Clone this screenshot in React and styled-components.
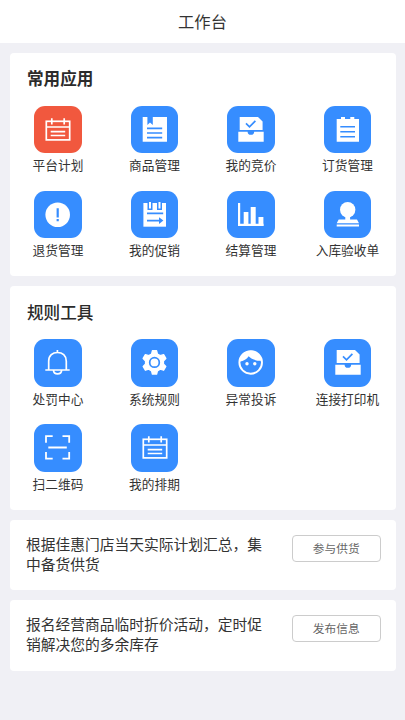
import React from 'react';
import styled, { createGlobalStyle } from 'styled-components';

const AZUL = '#368dff';
const ROJO = '#f1583e';

const GlobalStyle = createGlobalStyle`
    * {
        box-sizing: border-box;
    }
    body {
        margin: 0;
        background: #f0f0f5;
        font-family: "Noto Sans CJK SC", sans-serif;
        color: #333;
    }
`;

const Page = styled.div`
    min-height: 720px;
    display: flex;
    flex-direction: column;
    background: #f0f0f5;
`;

const Header = styled.header`
    height: 43px;
    display: flex;
    align-items: center;
    justify-content: center;
    padding-bottom: 2px;
    background: #fff;
    font-size: 16.3px;
    line-height: 24px;
    color: #333;
`;

const Main = styled.main`
    display: flex;
    flex-direction: column;
    gap: 10px;
    padding: 9.5px 9px 0 10px;
`;

const Card = styled.section`
    height: 223.8px;
    background: #fff;
    border-radius: 4px;
`;

const CardTitle = styled.h2`
    margin: 0;
    padding: 13.8px 17px 0;
    height: ${({ $height }) => $height || '53.5px'};
    font-size: 16.6px;
    line-height: 24px;
    font-weight: ${({ $weight }) => $weight || 700};
    color: #2b2b2b;
`;

const Grid = styled.div`
    display: grid;
    grid-template-columns: repeat(4, 96.5px);
    grid-auto-rows: 85px;
    margin-left: -0.3px;
`;

const Item = styled.div`
    display: flex;
    flex-direction: column;
    align-items: center;
    gap: 2px;
`;

const Tile = styled.div`
    width: 47.4px;
    height: 47.4px;
    border-radius: 11px;
    background: ${({ $bg }) => $bg || AZUL};
    color: ${({ $bg }) => $bg || AZUL};

    svg {
        display: block;
        width: 100%;
        height: 100%;
    }
`;

const Label = styled.span`
    font-size: 12.7px;
    line-height: 19px;
    white-space: nowrap;
`;

const Notice = styled.section`
    height: 70.3px;
    display: flex;
    justify-content: space-between;
    align-items: flex-start;
    padding: 15px 15.5px 0 16px;
    background: #fff;
    border-radius: 4px;
`;

const NoticeText = styled.p`
    margin: -1px 0 0;
    width: 240px;
    font-size: 14.75px;
    line-height: 19.6px;
`;

const Button = styled.button`
    width: 88.5px;
    height: 27px;
    padding: 0 0 1px;
    border: 1px solid #ccc;
    border-radius: 4px;
    background: #fff;
    font-family: inherit;
    font-size: 11.7px;
    line-height: 18px;
    color: #666;
`;

// white shapes, details cut out with currentColor (the tile colour)
const Icon = ({ children }) => (
    <svg viewBox="0 0 47.4 47.4" fill="none">{children}</svg>
);

const CalendarIcon = () => (
    <Icon>
        <g stroke="#fff" strokeWidth="1.7">
            <rect x="12.3" y="15.3" width="23.4" height="18.6" />
            <path d="M12 21H36M17.8 12.2V18.6M30.2 12.2V18.6M16.7 25.6H31.2M16.7 29.5H31.2" />
        </g>
    </Icon>
);

const BookIcon = () => (
    <Icon>
        <path fill="#fff" d="M11.7 11H16.4V19L19 16.6L21.8 19V11H36V35.7H11.7Z" />
        <path stroke="currentColor" strokeWidth="1.7" d="M16 22.4H31.2M16 27H31.2M16 31.6H31.2" />
    </Icon>
);

const TrayIcon = () => (
    <Icon>
        <path fill="#fff" d="M12.7 11H31L35.6 15.6V23.9H12.7ZM11.3 25.7H20.6A3.3 3.1 0 0 0 27.2 25.7H36.7V35.7H11.3Z" />
        <path stroke="currentColor" strokeWidth="1.7" d="M19 17.4L22.5 20.8L28.4 14.8" />
    </Icon>
);

const NotepadIcon = () => (
    <Icon>
        <path fill="#fff" d="M12.7 13H17V11H21V13H26.3V11H30.3V13H35V35.7H12.7Z" />
        <path stroke="currentColor" strokeWidth="1.6" d="M16.3 20.7H31M16.3 25.7H31M16.3 30.7H31" />
    </Icon>
);

const AlertIcon = () => (
    <Icon>
        <circle cx="23.7" cy="23.7" r="12.3" fill="#fff" />
        <path stroke="currentColor" strokeWidth="2.2" d="M23.7 17.2V26.4M23.7 28V30.3" />
    </Icon>
);

const PromoIcon = () => (
    <Icon>
        <path fill="#fff" d="M12.4 12H35V35.7H12.4Z" />
        <path fill="currentColor" d="M16.5 11H21.5V19H16.5ZM26 11H31V19H26Z" />
        <path fill="#fff" d="M18 11H20V17.6H18ZM27.5 11H29.5V17.6H27.5Z" />
        <path stroke="currentColor" strokeWidth="1.6" d="M16 22.4H32.2M16 29.6H29" />
        <path fill="currentColor" d="M28 26.2L32.4 29.6L28 33Z" />
    </Icon>
);

const ChartIcon = () => (
    <Icon>
        <path fill="#fff" d="M11 12H13.2V32.7H16.7V21H21.4V32.7H23.7V16H28.7V32.7H31.5V26H36.4V32.7H36.7V35H11Z" />
    </Icon>
);

const StampIcon = () => (
    <Icon>
        <circle cx="23.7" cy="18.7" r="7.7" fill="#fff" />
        <path fill="#fff" d="M21.3 25H26.1V28.4H33L35 32.2H12.7L14.7 28.4H21.3ZM12.7 33.6H35V35.6H12.7Z" />
    </Icon>
);

const BellIcon = () => (
    <Icon>
        <path
            stroke="#fff"
            strokeWidth="1.7"
            d="M23.4 11V13.4M14.7 31V22.2C14.7 16.6 18.6 13.5 23.5 13.5S32.3 16.6 32.3 22.2V31M11.3 31H35.7M19.5 31.4C19.8 36 27.3 36 27.6 31.4"
        />
    </Icon>
);

const GearIcon = () => (
    <Icon>
        <path
            fill="#fff"
            stroke="#fff"
            strokeWidth="1.4"
            strokeLinejoin="round"
            d="M21.4 11.8H25.6L26.4 15.1L29.2 16.7L32.6 15.7L34.8 19.4L32.4 21.9V25.1L34.8 27.5L32.6 31.2L29.2 30.2L26.4 31.8L25.6 35.1H21.4L20.6 31.8L17.8 30.2L14.4 31.2L12.2 27.5L14.6 25.1V21.9L12.2 19.4L14.4 15.7L17.8 16.7L20.6 15.1Z"
        />
        <circle cx="23.5" cy="23.4" r="4.8" stroke="currentColor" strokeWidth="1.7" />
    </Icon>
);

const FaceIcon = () => (
    <Icon>
        <circle cx="23.7" cy="23.4" r="11.3" stroke="#fff" strokeWidth="1.9" />
        <path fill="#fff" d="M12.8 22.5C13.5 15.5 18 11.8 23.7 11.8S34.2 16 34.8 21.8C30 22.2 24.5 20.3 21.6 17.3C20 20 16.5 22.2 12.8 22.5Z" />
        <circle cx="20" cy="24.8" r="1.7" fill="#fff" />
        <circle cx="27.8" cy="24.8" r="1.7" fill="#fff" />
    </Icon>
);

const ScanIcon = () => (
    <Icon>
        <path
            stroke="#fff"
            strokeWidth="1.8"
            d="M18.7 12.2H12V18.8M28.5 12.2H35.2V18.8M12 28V34.7H18.7M35.2 28V34.7H28.5M14.3 23.5H32.8"
        />
    </Icon>
);

const aplicaciones = [
    { label: '平台计划', icon: CalendarIcon, bg: ROJO },
    { label: '商品管理', icon: BookIcon },
    { label: '我的竞价', icon: TrayIcon },
    { label: '订货管理', icon: NotepadIcon },
    { label: '退货管理', icon: AlertIcon },
    { label: '我的促销', icon: PromoIcon },
    { label: '结算管理', icon: ChartIcon },
    { label: '入库验收单', icon: StampIcon },
];

const herramientas = [
    { label: '处罚中心', icon: BellIcon },
    { label: '系统规则', icon: GearIcon },
    { label: '异常投诉', icon: FaceIcon },
    { label: '连接打印机', icon: TrayIcon },
    { label: '扫二维码', icon: ScanIcon },
    { label: '我的排期', icon: CalendarIcon },
];

const avisos = [
    { text: '根据佳惠门店当天实际计划汇总，集中备货供货', action: '参与供货' },
    { text: '报名经营商品临时折价活动，定时促销解决您的多余库存', action: '发布信息' },
];

const AppGrid = ({ items }) => (
    <Grid>
        {items.map(({ label, icon: Drawing, bg }) => (
            <Item key={label}>
                <Tile $bg={bg}>
                    <Drawing />
                </Tile>
                <Label>{label}</Label>
            </Item>
        ))}
    </Grid>
);

const App = () => {
    return (
        <Page>
            <GlobalStyle />
            <Header>工作台</Header>
            <Main>
                <Card>
                    <CardTitle>常用应用</CardTitle>
                    <AppGrid items={aplicaciones} />
                </Card>
                <Card>
                    <CardTitle $weight={500} $height="52.9px">规则工具</CardTitle>
                    <AppGrid items={herramientas} />
                </Card>
                {avisos.map(({ text, action }) => (
                    <Notice key={action}>
                        <NoticeText>{text}</NoticeText>
                        <Button type="button">{action}</Button>
                    </Notice>
                ))}
            </Main>
        </Page>
    );
};

export default App;
